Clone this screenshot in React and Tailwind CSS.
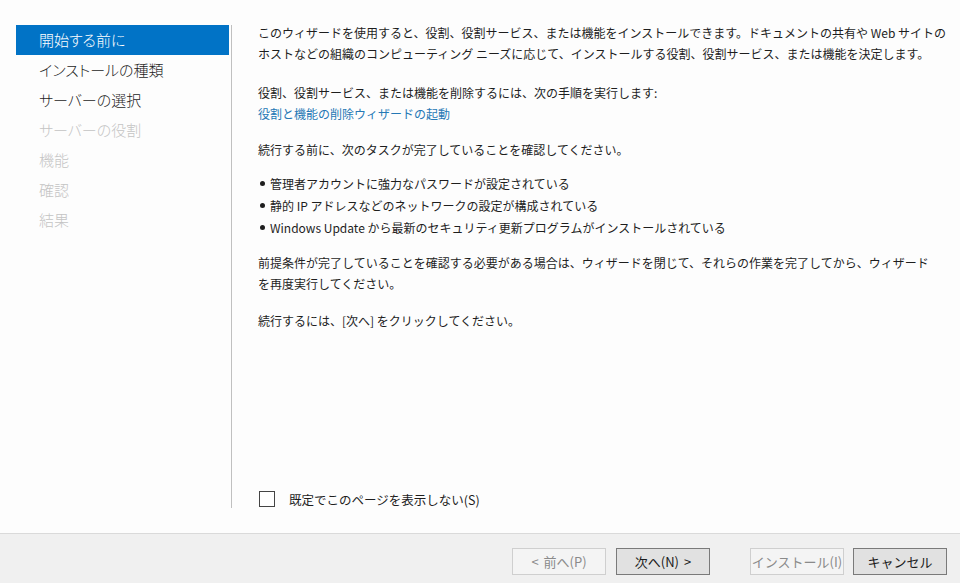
import React from "react";

const FONT = { fontFamily: '"Noto Sans CJK JP", "Noto Sans", sans-serif' };

function NavItem({ label, state }) {
  if (state === "active") {
    return (
      <div className="h-[30px] flex items-center pl-[23px] bg-[#0173c6] text-white text-[15px] font-light [font-feature-settings:'palt']">
        {label}
      </div>
    );
  }
  return (
    <div
      className={
        "h-[30px] flex items-center pl-[23px] text-[15px] font-light [font-feature-settings:'palt'] " +
        (state === "enabled" ? "text-[#1e1e1e]" : "text-[#c4c4c4]")
      }
    >
      {label}
    </div>
  );
}

function Bullet({ children }) {
  return (
    <div className="flex h-[22px] items-center">
      <span className="w-[5px] h-[5px] rounded-full bg-[#1e1e1e] ml-[2px] mr-[5px]" />
      <span>{children}</span>
    </div>
  );
}

function Btn({ children, disabled }) {
  return (
    <div
      className={
        "w-[94px] h-[27px] flex items-center justify-center gap-[5px] text-[13px] border " +
        (disabled
          ? "bg-[#f4f4f4] border-[#cfcfcf] text-[#8a8a8a]"
          : "bg-[#e1e1e1] border-[#7a7a7a] text-[#1a1a1a]")
      }
    >
      {children}
    </div>
  );
}

export default function App() {
  return (
    <div className="w-[960px] h-[583px] bg-[#fdfdfd] flex flex-col overflow-hidden" style={FONT}>
      <div className="h-[533px] flex">
        <div className="w-[229px] pl-[16px] pt-[25px] flex flex-col">
          <NavItem label="開始する前に" state="active" />
          <NavItem label="インストールの種類" state="enabled" />
          <NavItem label="サーバーの選択" state="enabled" />
          <NavItem label="サーバーの役割" state="disabled" />
          <NavItem label="機能" state="disabled" />
          <NavItem label="確認" state="disabled" />
          <NavItem label="結果" state="disabled" />
        </div>
        <div className="w-[2px]" />
        <div className="w-[1px] mt-[25px] h-[483px] bg-[#c0c0c0]" />
        <div className="flex-1 pl-[26px] pt-[22px] pb-[26px] flex flex-col text-[12px] leading-[21px] text-[#1e1e1e]">
          <div className="whitespace-nowrap">
            <div>このウィザードを使用すると、役割、役割サービス、または機能をインストールできます。ドキュメントの共有や Web サイトの</div>
            <div>ホストなどの組織のコンピューティング ニーズに応じて、インストールする役割、役割サービス、または機能を決定します。</div>
          </div>
          <div className="mt-[18px]">役割、役割サービス、または機能を削除するには、次の手順を実行します:</div>
          <div className="text-[#2578b5]">役割と機能の削除ウィザードの起動</div>
          <div className="mt-[15px]">続行する前に、次のタスクが完了していることを確認してください。</div>
          <div className="mt-[12px] flex flex-col">
            <Bullet>管理者アカウントに強力なパスワードが設定されている</Bullet>
            <Bullet>静的 IP アドレスなどのネットワークの設定が構成されている</Bullet>
            <Bullet>Windows Update から最新のセキュリティ更新プログラムがインストールされている</Bullet>
          </div>
          <div className="mt-[14px] whitespace-nowrap">
            <div>前提条件が完了していることを確認する必要がある場合は、ウィザードを閉じて、それらの作業を完了してから、ウィザード</div>
            <div>を再度実行してください。</div>
          </div>
          <div className="mt-[16px]">続行するには、[次へ] をクリックしてください。</div>
          <div className="flex-1" />
          <div className="flex items-center h-[16px] pl-[1px]">
            <div className="w-[16px] h-[16px] border border-[#444] bg-white" />
            <span className="ml-[14px] text-[12.5px]">既定でこのページを表示しない(S)</span>
          </div>
        </div>
      </div>
      <div className="flex-1 border-t border-[#dadada] bg-[#f0f0f0] flex justify-end items-start pt-[14px] pr-[13px]">
        <Btn disabled><span>&lt;</span><span>前へ(P)</span></Btn>
        <div className="w-[10px]" />
        <Btn><span>次へ(N)</span><span>&gt;</span></Btn>
        <div className="w-[40px]" />
        <Btn disabled>インストール(I)</Btn>
        <div className="w-[9px]" />
        <Btn>キャンセル</Btn>
      </div>
    </div>
  );
}
